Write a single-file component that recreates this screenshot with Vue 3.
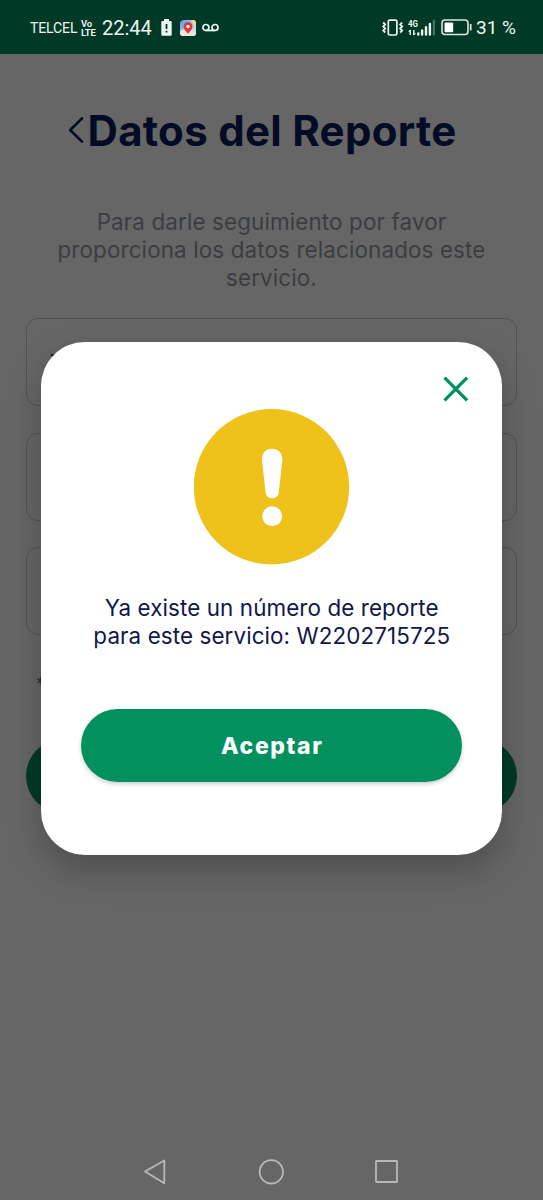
<script setup>
const subtitle = ['Para darle seguimiento por favor', 'proporciona los datos relacionados este', 'servicio.']
const message = ['Ya existe un número de reporte', 'para este servicio: W2202715725']
const fields = ['-', '', '']
</script>

<template>
  <div class="screen">
    <header class="status">
      <div class="status-side">
        <span class="carrier">TELCEL</span>
        <span class="volte"><span>Vo</span><span>LTE</span></span>
        <span class="clock">22:44</span>
        <svg class="battery-alert" width="11" height="17" viewBox="0 0 11 17">
          <path d="M3 0h5v2h1.500q1.200 0 1.200 1.200v12.400q0 1.200-1.200 1.200h-8q-1.200 0-1.200-1.200v-12.400q0-1.200 1.200-1.200h1.500z" fill="#eef5f1" />
          <path d="M5.500 5v5M5.500 11.800v1.800" stroke="#003a27" stroke-width="1.800" />
        </svg>
        <svg class="map" width="16" height="16" viewBox="0 0 16 16">
          <defs>
            <linearGradient id="mapTint" x1="0" y1="0" x2="1" y2="1">
              <stop offset="0" stop-color="#3e9de8" />
              <stop offset=".5" stop-color="#a5cfea" />
              <stop offset="1" stop-color="#f5ecdc" />
            </linearGradient>
          </defs>
          <rect width="16" height="16" rx="3.500" fill="url(#mapTint)" />
          <path d="M0 11l6-3 10 5v0q0 3-3 3H3q-3 0-3-3z" fill="#e9e7df" />
          <path d="M11 0h2q3 0 3 3v5z" fill="#f1d88d" />
          <path d="M8 13.800C5 10.500 3.500 9 3.500 6.500a4.500 4.500 0 0 1 9 0C12.500 9 11 10.500 8 13.800z" fill="#e5343e" />
          <circle cx="8" cy="6.500" r="1.700" fill="#fff" />
        </svg>
        <svg class="voicemail" width="17" height="9" viewBox="0 0 17 9" fill="none" stroke="#eef5f1" stroke-width="1.700">
          <circle cx="3.900" cy="4.500" r="3" />
          <circle cx="13" cy="4.500" r="3" />
          <path d="M3.900 7.500H13" />
        </svg>
      </div>
      <div class="status-side">
        <svg class="vibrate" width="22" height="18" viewBox="0 0 22 18" fill="none" stroke="#eef5f1">
          <rect x="6.300" y="1.200" width="8.600" height="14.800" rx="1.400" stroke-width="1.700" />
          <path d="M1.200 3.500l2 2-2 2 2 2-2 2 2 2M20.200 3.500l-2 2 2 2-2 2 2 2-2 2" stroke-width="1.800" />
        </svg>
        <svg class="signal" width="28" height="18" viewBox="0 0 28 18">
          <text x="0" y="7.500" class="network" textLength="10" lengthAdjust="spacingAndGlyphs">4G</text>
          <path d="M2.200 11v5M5.800 11v5" stroke="#eef5f1" stroke-width="1.400" />
          <path d="M0 12.700l2.200-2.200v2.200zM8 14.300l-2.200 2.200v-2.200z" fill="#eef5f1" />
          <path d="M10.300 14.500v1M14.100 11.500v4M18 8.300v7.200M21.900 5v10.500" stroke="#eef5f1" stroke-width="2.400" stroke-linecap="round" />
          <path d="M25.900 1.500v14" stroke="#4b7163" stroke-width="2.200" stroke-linecap="round" />
        </svg>
        <svg class="battery" width="31" height="17" viewBox="0 0 31 17">
          <rect x="1" y="1" width="26" height="14.500" rx="3" fill="none" stroke="#dce7e2" stroke-width="1.600" />
          <rect x="3.500" y="3.400" width="8.700" height="9.800" rx="1" fill="#fff" />
          <path d="M29.700 5v6.500" stroke="#dce7e2" stroke-width="1.700" />
        </svg>
        <span class="percent">31 %</span>
      </div>
    </header>

    <main class="page">
      <div class="heading">
        <svg width="18" height="28" viewBox="0 0 18 28" fill="none" stroke="#040b24" stroke-width="2.600" stroke-linecap="round" stroke-linejoin="round">
          <path d="M14 2.300L2.200 14l11.800 11.700" />
        </svg>
        <h1>Datos del Reporte</h1>
      </div>
      <p class="subtitle"><span v-for="line in subtitle" :key="line">{{ line }}</span></p>
      <div class="fields">
        <div v-for="(value, i) in fields" :key="i" class="field">{{ value }}</div>
      </div>
      <p class="required">*</p>
      <div class="submit"></div>
    </main>

    <nav class="nav">
      <svg width="24" height="26" viewBox="0 0 24 26"><path d="M2 12.500L21.300 1.500v22.800z" /></svg>
      <svg width="26" height="26" viewBox="0 0 26 26"><circle cx="13.300" cy="12.800" r="11.700" /></svg>
      <svg width="24" height="26" viewBox="0 0 24 26"><rect x="1" y="2" width="21" height="21" rx=".5" /></svg>
    </nav>

    <section class="dialog">
      <button class="close" aria-label="Cerrar">
        <svg width="26" height="26" viewBox="0 0 26 26"><path d="M1.500 1.700l22.600 22.600M24.100 1.700L1.500 24.300" stroke="#03905f" stroke-width="3.300" /></svg>
      </button>
      <svg class="warning" width="156" height="156" viewBox="0 0 156 156">
        <circle cx="77.500" cy="77.800" r="77.700" fill="#efc11b" />
        <path d="M68 51.500C67.400 44 72 39.700 78 39.700S88.900 44 88.300 51.500L84.700 84C84.200 87.600 81.400 89.300 78.200 89.300S72.200 87.600 71.700 84z" fill="#fff" />
        <circle cx="78.200" cy="107.300" r="10" fill="#fff" />
      </svg>
      <p class="message"><span v-for="line in message" :key="line">{{ line }}</span></p>
      <button class="accept">Aceptar</button>
    </section>
  </div>
</template>

<style>
body {
  background: #666;
}
</style>

<style scoped>
.screen {
  position: relative;
  display: flex;
  flex-direction: column;
  width: 543px;
  height: 1200px;
  overflow: hidden;
  background: #666;
  font-family: Inter, sans-serif;
}
.status {
  display: flex;
  justify-content: space-between;
  box-sizing: border-box;
  height: 54px;
  padding: 1px 27px 0 30px;
  background: #003a27;
  color: #eef5f1;
  font-family: Roboto, sans-serif;
}
.status-side {
  display: flex;
  align-items: center;
  white-space: nowrap;
}
.carrier {
  width: 47px;
  font-size: 14px;
  letter-spacing: -0.1px;
}
.volte {
  display: flex;
  flex-direction: column;
  width: 16px;
  margin-left: 4px;
  font-size: 9.500px;
  line-height: 9px;
  font-weight: 600;
  letter-spacing: -0.2px;
}
.clock {
  width: 51px;
  margin-left: 5px;
  font-size: 20px;
}
.battery-alert { margin-left: 8px; }
.map { margin-left: 8px; }
.voicemail { margin-left: 6px; }
.signal { margin-left: 4px; }
.network {
  font: 700 9.500px Roboto, sans-serif;
  fill: #eef5f1;
}
.battery { margin-left: 5px; }
.percent {
  width: 40px;
  margin-left: 4px;
  font-size: 19px;
}
.page {
  flex: 1;
  padding: 0 26px;
}
.heading {
  display: flex;
  align-items: center;
  height: 50px;
  margin: 51px 0 0 41.500px;
}
h1 {
  margin: 2px 0 0 2px;
  color: #040b24;
  font-size: 42px;
  line-height: 50px;
  font-weight: 700;
  letter-spacing: 0.3px;
  white-space: nowrap;
}
.subtitle {
  display: flex;
  flex-direction: column;
  align-items: center;
  margin: 53.300px 0 0;
  color: #3c3d42;
  font-size: 22.400px;
  line-height: 27.800px;
  letter-spacing: 0.13px;
  white-space: nowrap;
}
.fields {
  display: flex;
  flex-direction: column;
  gap: 26.500px;
  margin-top: 26.800px;
}
.field {
  box-sizing: border-box;
  height: 88px;
  padding: 22px;
  border: 1.500px solid #525252;
  border-radius: 12px;
  color: #16181f;
  font-size: 22px;
}
.required {
  margin: 39px 0 0 10px;
  height: 32px;
  color: #2b2c30;
  font-size: 18px;
}
.submit {
  height: 74px;
  margin-top: 33px;
  border-radius: 37px;
  background: #003a27;
}
.nav {
  display: flex;
  align-items: center;
  justify-content: space-between;
  height: 56px;
  padding: 0 144px 0 143px;
}
.nav svg {
  fill: none;
  stroke: #b8b8b8;
  stroke-width: 1.800;
  stroke-linejoin: round;
}
.dialog {
  position: absolute;
  top: 342px;
  left: 40.500px;
  display: flex;
  flex-direction: column;
  align-items: center;
  box-sizing: border-box;
  width: 461.500px;
  height: 512.500px;
  padding-top: 34px;
  border-radius: 44px;
  background: #fff;
  box-shadow: 0 15px 36px rgba(0, 0, 0, 0.24);
}
button {
  padding: 0;
  border: 0;
  background: none;
}
.close {
  align-self: flex-end;
  width: 26px;
  height: 26px;
  margin-right: 33.400px;
}
.close svg { display: block; }
.warning {
  flex: none;
  margin: 7px 0 0 1px;
}
.message {
  display: flex;
  flex-direction: column;
  align-items: center;
  margin: 29px 0 0 1px;
  color: #10184a;
  font-size: 22.400px;
  line-height: 27.800px;
  letter-spacing: 0.1px;
  white-space: nowrap;
}
.accept {
  width: 380.500px;
  height: 73.500px;
  margin-top: 59.400px;
  padding-left: 2px;
  border-radius: 37px;
  background: #03905f;
  box-shadow: 0 2px 4px rgba(0, 0, 0, 0.2);
  color: #fff;
  font: 800 23px Inter, sans-serif;
  letter-spacing: 1.600px;
}
</style>
